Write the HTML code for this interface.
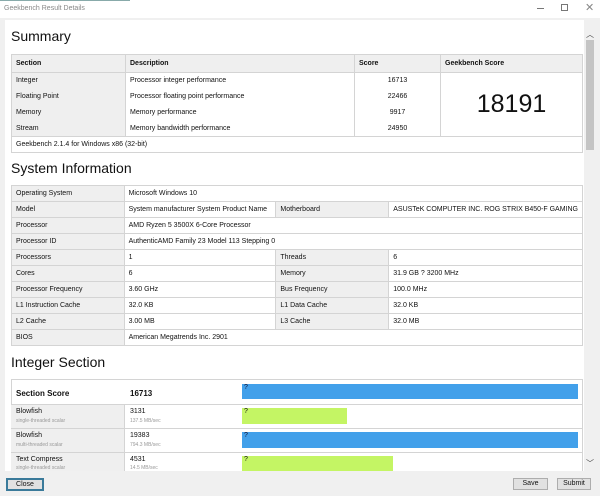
<!DOCTYPE html><html><head><style>
*{margin:0;padding:0;box-sizing:border-box}
body{width:600px;height:496px;overflow:hidden;background:#f0f0f0;font-family:"Liberation Sans",sans-serif;color:#111;position:relative}
.a{position:absolute}
.t{font-size:7px;white-space:nowrap}
.h{font-size:14px;color:#111}
table{border-collapse:collapse;position:absolute;font-size:7px}
td{border:1px solid #d4d4d4;padding:0 4px;height:16px;white-space:nowrap}
.g{background:#efefef}
.b{font-size:7px;text-align:center;background:#e1e1e1;line-height:10px}
</style></head><body>
<div class="a" style="left:0;top:0;width:600px;height:18px;background:#fff"></div>
<div class="a" style="left:0;top:0;width:130px;height:1px;background:#8aa"></div>
<div class="a t" style="left:4px;top:5px;color:#888">Geekbench Result Details</div>
<div class="a" style="left:537px;top:8px;width:7px;height:1px;background:#777"></div>
<div class="a" style="left:561px;top:4px;width:7px;height:7px;border:1px solid #777"></div>
<div class="a" style="left:585px;top:1px;font-size:11px;color:#888">✕</div>
<div class="a" style="left:5px;top:20px;width:580px;height:451px;background:#fff"></div>
<div class="a" style="left:584px;top:20px;width:12px;height:451px;background:#f0f0f0"></div>
<div class="a" style="left:586px;top:40px;width:8px;height:110px;background:#c4c4c4"></div>
<div class="a" style="left:586px;top:29px;font-size:8px;color:#444">︿</div>
<div class="a" style="left:586px;top:458px;font-size:8px;color:#444">﹀</div>

<div class="a h" style="left:11px;top:28px">Summary</div>
<table style="left:11px;top:54px;width:572px">
<tr style="background:#efefef;font-weight:bold;height:18px"><td style="width:114px">Section</td><td style="width:229px">Description</td><td style="width:86px">Score</td><td>Geekbench Score</td></tr>
<tr><td class="g" style="border-bottom:0">Integer</td><td style="border-bottom:0">Processor integer performance</td><td style="text-align:center;border-bottom:0">16713</td><td rowspan="4" style="text-align:center;font-size:25px;background:#fff">18191</td></tr>
<tr><td class="g" style="border-top:0;border-bottom:0">Floating Point</td><td style="border-top:0;border-bottom:0">Processor floating point performance</td><td style="text-align:center;border-top:0;border-bottom:0">22466</td></tr>
<tr><td class="g" style="border-top:0;border-bottom:0">Memory</td><td style="border-top:0;border-bottom:0">Memory performance</td><td style="text-align:center;border-top:0;border-bottom:0">9917</td></tr>
<tr><td class="g" style="border-top:0">Stream</td><td style="border-top:0">Memory bandwidth performance</td><td style="text-align:center;border-top:0">24950</td></tr>
<tr><td colspan="4">Geekbench 2.1.4 for Windows x86 (32-bit)</td></tr>
</table>

<div class="a h" style="left:11px;top:160px">System Information</div>
<table style="left:11px;top:185px;width:572px">
<tr><td class="g" style="width:114px">Operating System</td><td colspan="3">Microsoft Windows 10</td></tr>
<tr><td class="g">Model</td><td style="width:152px">System manufacturer System Product Name</td><td class="g" style="width:115px">Motherboard</td><td>ASUSTeK COMPUTER INC. ROG STRIX B450-F GAMING</td></tr>
<tr><td class="g">Processor</td><td colspan="3">AMD Ryzen 5 3500X 6-Core Processor</td></tr>
<tr><td class="g">Processor ID</td><td colspan="3">AuthenticAMD Family 23 Model 113 Stepping 0</td></tr>
<tr><td class="g">Processors</td><td>1</td><td class="g">Threads</td><td>6</td></tr>
<tr><td class="g">Cores</td><td>6</td><td class="g">Memory</td><td>31.9 GB ? 3200 MHz</td></tr>
<tr><td class="g">Processor Frequency</td><td>3.60 GHz</td><td class="g">Bus Frequency</td><td>100.0 MHz</td></tr>
<tr><td class="g">L1 Instruction Cache</td><td>32.0 KB</td><td class="g">L1 Data Cache</td><td>32.0 KB</td></tr>
<tr><td class="g">L2 Cache</td><td>3.00 MB</td><td class="g">L3 Cache</td><td>32.0 MB</td></tr>
<tr><td class="g">BIOS</td><td colspan="3">American Megatrends Inc. 2901</td></tr>
</table>

<div class="a h" style="left:11px;top:354px">Integer Section</div>
<div class="a" style="left:11px;top:379px;width:572px;height:92px;border:1px solid #d4d4d4;border-bottom:0"></div>
<div class="a" style="left:11px;top:404px;width:114px;height:67px;background:#efefef;border-right:1px solid #d4d4d4"></div>
<div class="a" style="left:11px;top:404px;width:572px;height:1px;background:#d4d4d4"></div>
<div class="a" style="left:11px;top:428px;width:572px;height:1px;background:#d4d4d4"></div>
<div class="a" style="left:11px;top:452px;width:572px;height:1px;background:#d4d4d4"></div>
<div class="a" style="left:16px;top:389px;font-size:8px;font-weight:bold">Section Score</div>
<div class="a" style="left:130px;top:389px;font-size:8px;font-weight:bold">16713</div>
<div class="a t" style="left:16px;top:408px;font-size:7px">Blowfish</div><div class="a" style="left:16px;top:418px;font-size:5px;color:#999">single-threaded scalar</div>
<div class="a t" style="left:130px;top:408px">3131</div><div class="a" style="left:130px;top:418px;font-size:5px;color:#999">137.5 MB/sec</div>
<div class="a t" style="left:16px;top:432px">Blowfish</div><div class="a" style="left:16px;top:442px;font-size:5px;color:#999">multi-threaded scalar</div>
<div class="a t" style="left:130px;top:432px">19383</div><div class="a" style="left:130px;top:442px;font-size:5px;color:#999">794.3 MB/sec</div>
<div class="a t" style="left:16px;top:456px">Text Compress</div><div class="a" style="left:16px;top:465px;font-size:5px;color:#999">single-threaded scalar</div>
<div class="a t" style="left:130px;top:456px">4531</div><div class="a" style="left:130px;top:465px;font-size:5px;color:#999">14.5 MB/sec</div>
<div class="a t" style="left:242px;top:384px;width:336px;height:15px;background:#42a0ea;padding-left:2px;color:#113">?</div>
<div class="a t" style="left:242px;top:408px;width:105px;height:16px;background:#c4f564;padding-left:2px">?</div>
<div class="a t" style="left:242px;top:432px;width:336px;height:16px;background:#42a0ea;padding-left:2px;color:#113">?</div>
<div class="a t" style="left:242px;top:456px;width:151px;height:15px;background:#c4f564;padding-left:2px">?</div>

<div class="a b" style="left:6px;top:478px;width:38px;height:13px;border:2px solid #3a7a9a;line-height:9px">Close</div>
<div class="a b" style="left:513px;top:478px;width:35px;height:12px;border:1px solid #adadad">Save</div>
<div class="a b" style="left:557px;top:478px;width:34px;height:12px;border:1px solid #adadad">Submit</div>
</body></html>
